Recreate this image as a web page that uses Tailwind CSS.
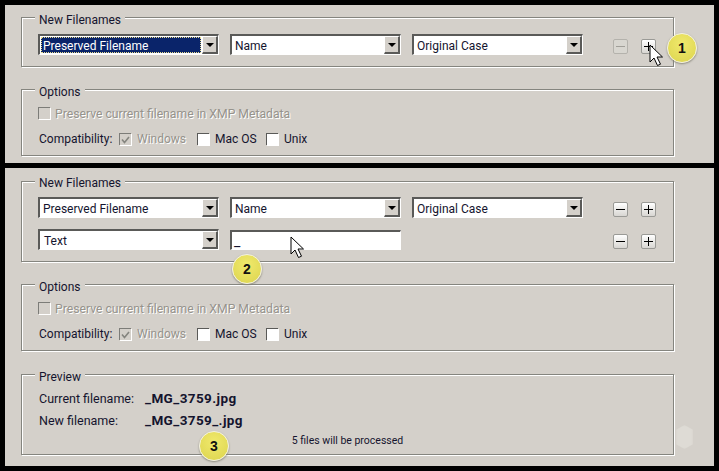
<!DOCTYPE html>
<html lang="en">
<head>
  <meta charset="UTF-8" />
  <title>Batch Rename</title>
  <script src="https://cdn.jsdelivr.net/npm/@tailwindcss/browser@4"></script>
</head>
<body class="bg-black w-[719px] h-[471px] overflow-hidden relative font-['Roboto',sans-serif] text-[12px] leading-[15px] text-[#14142e] px-[5px] pt-[5px]">

  <!-- Top panel: one row -->
  <section class="relative w-[709px] h-[158px] bg-[#d4d0ca] pt-[12px] pl-[16px]">
    <div class="relative w-[653px] h-[50px] border border-[#85857f] shadow-[1px_1px_0_#fff,inset_1px_1px_0_#fff] pt-[16px] pl-[16px]">
      <span class="absolute -top-[5px] left-[13px] px-[4px] bg-[#d4d0ca]">New Filenames</span>
      <div class="flex items-center">
        <div class="w-[181px] h-[21px] flex border-t-2 border-l-2 border-[#5a5a58] border-r border-b border-r-white border-b-white bg-white">
          <div class="flex-1 m-px bg-[#0a246a] text-white border border-dotted border-[#e8dc90] pl-px pt-[2px] flex items-center">Preserved Filename</div>
          <div class="w-[16px] flex items-center justify-center bg-[#d4d0ca] border-t border-l border-white border-r-2 border-b-2 border-r-[#5a5a58] border-b-[#5a5a58]">
            <svg width="8" height="4" viewBox="0 0 8 4"><path d="M0 0h8L4 4z" fill="#000"/></svg>
          </div>
        </div>
        <div class="ml-[11px] w-[171px] h-[21px] flex border-t-2 border-l-2 border-[#5a5a58] border-r border-b border-r-white border-b-white bg-white">
          <div class="flex-1 pl-[3px] pt-[2px] flex items-center">Name</div>
          <div class="w-[16px] flex items-center justify-center bg-[#d4d0ca] border-t border-l border-white border-r-2 border-b-2 border-r-[#5a5a58] border-b-[#5a5a58]">
            <svg width="8" height="4" viewBox="0 0 8 4"><path d="M0 0h8L4 4z" fill="#000"/></svg>
          </div>
        </div>
        <div class="ml-[11px] w-[171px] h-[21px] flex border-t-2 border-l-2 border-[#5a5a58] border-r border-b border-r-white border-b-white bg-white">
          <div class="flex-1 pl-[3px] pt-[2px] flex items-center">Original Case</div>
          <div class="w-[16px] flex items-center justify-center bg-[#d4d0ca] border-t border-l border-white border-r-2 border-b-2 border-r-[#5a5a58] border-b-[#5a5a58]">
            <svg width="8" height="4" viewBox="0 0 8 4"><path d="M0 0h8L4 4z" fill="#000"/></svg>
          </div>
        </div>
        <div class="ml-[30px] mt-[3px] w-[15px] h-[15px] flex items-center justify-center border border-[#b4b2ac] rounded-[2px] bg-[#d8d6d0]">
          <div class="w-[9px] h-px bg-[#a09e98]"></div>
        </div>
        <div class="ml-[13px] mt-[3px] w-[15px] h-[15px] relative border border-[#9a9a96] rounded-[2px] bg-gradient-to-b from-white to-[#d8d6d2]">
          <div class="absolute left-[2px] top-[6px] w-[9px] h-px bg-black"></div>
          <div class="absolute left-[6px] top-[2px] w-px h-[9px] bg-black"></div>
        </div>
      </div>
    </div>

    <div class="relative mt-[22px] w-[653px] h-[67px] border border-[#85857f] shadow-[1px_1px_0_#fff,inset_1px_1px_0_#fff] pt-[17px] pl-[16px]">
      <span class="absolute -top-[5px] left-[13px] px-[4px] bg-[#d4d0ca]">Options</span>
      <div class="flex items-center h-[12px]">
        <div class="w-[12px] h-[12px] border-t border-l border-[#7c7c78] shadow-[1px_1px_0_#fff]"></div>
        <span class="ml-[5px] mt-[2px] text-[12.2px] text-[#96938c] [text-shadow:1px_1px_0_#fff]">Preserve current filename in XMP Metadata</span>
      </div>
      <div class="flex items-center h-[12px] mt-[14px]">
        <span class="ml-px w-[80px]">Compatibility:</span>
        <div class="w-[12px] h-[12px] flex items-center justify-center border-t border-l border-[#7c7c78] shadow-[1px_1px_0_#fff] bg-[#d4d0ca]">
          <svg width="9" height="8" viewBox="0 0 9 8"><path d="M1 3.5l2.500 3L8 1" fill="none" stroke="#85857f" stroke-width="1.6"/></svg>
        </div>
        <span class="ml-[6px] w-[60px] text-[#96938c] [text-shadow:1px_1px_0_#fff]">Windows</span>
        <div class="w-[12px] h-[12px] bg-white border-t border-l border-[#5a5a58] shadow-[1px_1px_0_#fff]"></div>
        <span class="ml-[6px] w-[51px]">Mac OS</span>
        <div class="w-[12px] h-[12px] bg-white border-t border-l border-[#5a5a58] shadow-[1px_1px_0_#fff]"></div>
        <span class="ml-[6px]">Unix</span>
      </div>
    </div>

    <div class="absolute left-[662px] top-[28px] w-[30px] h-[30px] rounded-full border border-[#f4f2dc] bg-[radial-gradient(circle_at_50%_35%,#f0e96c,#dcd44e)] shadow-[0_1px_2px_#8a887a] flex items-center justify-center font-['Liberation_Sans',sans-serif] font-bold text-[14px] text-[#111]">1</div>
    <svg class="absolute left-[644px] top-[39px]" width="15" height="23" viewBox="0 0 15 23"><path d="M1 1v17l4-4 3.500 7.500 3-1.300L8 13h5.500z" fill="#fff" stroke="#000"/></svg>
  </section>

  <!-- Bottom panel: two rows and the preview -->
  <section class="relative w-[709px] h-[298px] mt-[5px] bg-[#d4d0ca] pt-[13px] pl-[16px]">
    <div class="relative w-[653px] h-[81px] border border-[#85857f] shadow-[1px_1px_0_#fff,inset_1px_1px_0_#fff] pt-[15px] pl-[16px]">
      <span class="absolute -top-[6px] left-[13px] px-[4px] bg-[#d4d0ca]">New Filenames</span>
      <div class="flex items-center">
        <div class="w-[181px] h-[21px] flex border-t-2 border-l-2 border-[#5a5a58] border-r border-b border-r-white border-b-white bg-white">
          <div class="flex-1 pl-[3px] pt-[2px] flex items-center">Preserved Filename</div>
          <div class="w-[16px] flex items-center justify-center bg-[#d4d0ca] border-t border-l border-white border-r-2 border-b-2 border-r-[#5a5a58] border-b-[#5a5a58]">
            <svg width="8" height="4" viewBox="0 0 8 4"><path d="M0 0h8L4 4z" fill="#000"/></svg>
          </div>
        </div>
        <div class="ml-[11px] w-[171px] h-[21px] flex border-t-2 border-l-2 border-[#5a5a58] border-r border-b border-r-white border-b-white bg-white">
          <div class="flex-1 pl-[3px] pt-[2px] flex items-center">Name</div>
          <div class="w-[16px] flex items-center justify-center bg-[#d4d0ca] border-t border-l border-white border-r-2 border-b-2 border-r-[#5a5a58] border-b-[#5a5a58]">
            <svg width="8" height="4" viewBox="0 0 8 4"><path d="M0 0h8L4 4z" fill="#000"/></svg>
          </div>
        </div>
        <div class="ml-[11px] w-[171px] h-[21px] flex border-t-2 border-l-2 border-[#5a5a58] border-r border-b border-r-white border-b-white bg-white">
          <div class="flex-1 pl-[3px] pt-[2px] flex items-center">Original Case</div>
          <div class="w-[16px] flex items-center justify-center bg-[#d4d0ca] border-t border-l border-white border-r-2 border-b-2 border-r-[#5a5a58] border-b-[#5a5a58]">
            <svg width="8" height="4" viewBox="0 0 8 4"><path d="M0 0h8L4 4z" fill="#000"/></svg>
          </div>
        </div>
        <div class="ml-[30px] mt-[3px] w-[15px] h-[15px] relative border border-[#9a9a96] rounded-[2px] bg-gradient-to-b from-white to-[#d8d6d2]">
          <div class="absolute left-[2px] top-[6px] w-[9px] h-px bg-black"></div>
        </div>
        <div class="ml-[13px] mt-[3px] w-[15px] h-[15px] relative border border-[#9a9a96] rounded-[2px] bg-gradient-to-b from-white to-[#d8d6d2]">
          <div class="absolute left-[2px] top-[6px] w-[9px] h-px bg-black"></div>
          <div class="absolute left-[6px] top-[2px] w-px h-[9px] bg-black"></div>
        </div>
      </div>
      <div class="flex items-center mt-[11px]">
        <div class="w-[181px] h-[21px] flex border-t-2 border-l-2 border-[#5a5a58] border-r border-b border-r-white border-b-white bg-white">
          <div class="flex-1 pl-[4px] pt-[2px] flex items-center">Text</div>
          <div class="w-[16px] flex items-center justify-center bg-[#d4d0ca] border-t border-l border-white border-r-2 border-b-2 border-r-[#5a5a58] border-b-[#5a5a58]">
            <svg width="8" height="4" viewBox="0 0 8 4"><path d="M0 0h8L4 4z" fill="#000"/></svg>
          </div>
        </div>
        <div class="ml-[11px] w-[171px] h-[20px] border-t-2 border-l-2 border-[#5a5a58] border-r border-b border-r-white border-b-white bg-white pl-[2px] text-[14px] leading-[19px]">_</div>
        <div class="ml-[212px] mt-[3px] w-[15px] h-[15px] relative border border-[#9a9a96] rounded-[2px] bg-gradient-to-b from-white to-[#d8d6d2]">
          <div class="absolute left-[2px] top-[6px] w-[9px] h-px bg-black"></div>
        </div>
        <div class="ml-[13px] mt-[3px] w-[15px] h-[15px] relative border border-[#9a9a96] rounded-[2px] bg-gradient-to-b from-white to-[#d8d6d2]">
          <div class="absolute left-[2px] top-[6px] w-[9px] h-px bg-black"></div>
          <div class="absolute left-[6px] top-[2px] w-px h-[9px] bg-black"></div>
        </div>
      </div>
    </div>

    <div class="relative mt-[22px] w-[653px] h-[67px] border border-[#85857f] shadow-[1px_1px_0_#fff,inset_1px_1px_0_#fff] pt-[17px] pl-[16px]">
      <span class="absolute -top-[5px] left-[13px] px-[4px] bg-[#d4d0ca]">Options</span>
      <div class="flex items-center h-[12px]">
        <div class="w-[12px] h-[12px] border-t border-l border-[#7c7c78] shadow-[1px_1px_0_#fff]"></div>
        <span class="ml-[5px] mt-[2px] text-[12.2px] text-[#96938c] [text-shadow:1px_1px_0_#fff]">Preserve current filename in XMP Metadata</span>
      </div>
      <div class="flex items-center h-[12px] mt-[14px]">
        <span class="ml-px w-[80px]">Compatibility:</span>
        <div class="w-[12px] h-[12px] flex items-center justify-center border-t border-l border-[#7c7c78] shadow-[1px_1px_0_#fff] bg-[#d4d0ca]">
          <svg width="9" height="8" viewBox="0 0 9 8"><path d="M1 3.5l2.500 3L8 1" fill="none" stroke="#85857f" stroke-width="1.6"/></svg>
        </div>
        <span class="ml-[6px] w-[60px] text-[#96938c] [text-shadow:1px_1px_0_#fff]">Windows</span>
        <div class="w-[12px] h-[12px] bg-white border-t border-l border-[#5a5a58] shadow-[1px_1px_0_#fff]"></div>
        <span class="ml-[6px] w-[51px]">Mac OS</span>
        <div class="w-[12px] h-[12px] bg-white border-t border-l border-[#5a5a58] shadow-[1px_1px_0_#fff]"></div>
        <span class="ml-[6px]">Unix</span>
      </div>
    </div>

    <div class="relative mt-[23px] w-[653px] h-[81px] border border-[#85857f] shadow-[1px_1px_0_#fff,inset_1px_1px_0_#fff] pt-[12px]">
      <span class="absolute -top-[5px] left-[13px] px-[4px] bg-[#d4d0ca]">Preview</span>
      <div class="flex items-center h-[22px] pl-[17px]">
        <span class="w-[106px] text-[12.5px]">Current filename:</span>
        <span class="font-bold text-[13.5px] tracking-[0.4px]">_MG_3759.jpg</span>
      </div>
      <div class="flex items-center h-[22px] pl-[17px]">
        <span class="w-[106px] text-[12.5px]">New filename:</span>
        <span class="font-bold text-[13.5px] tracking-[0.4px]">_MG_3759_.jpg</span>
      </div>
      <div class="text-center text-[10.5px] mt-[2px]">5 files will be processed</div>
    </div>

    <div class="absolute left-[671px] top-[257px] w-[17px] h-[24px] bg-[#dedbd5] blur-[1px] [clip-path:polygon(50%_0,100%_20%,100%_80%,50%_100%,0_80%,0_20%)]"></div>
    <div class="absolute left-[227px] top-[86px] w-[30px] h-[30px] rounded-full border border-[#f4f2dc] bg-[radial-gradient(circle_at_50%_35%,#f0e96c,#dcd44e)] shadow-[0_1px_2px_#8a887a] flex items-center justify-center font-['Liberation_Sans',sans-serif] font-bold text-[14px] text-[#111]">2</div>
    <div class="absolute left-[194px] top-[263px] w-[30px] h-[30px] rounded-full border border-[#f4f2dc] bg-[radial-gradient(circle_at_50%_35%,#f0e96c,#dcd44e)] shadow-[0_1px_2px_#8a887a] flex items-center justify-center font-['Liberation_Sans',sans-serif] font-bold text-[14px] text-[#111]">3</div>
    <svg class="absolute left-[285px] top-[68px]" width="15" height="23" viewBox="0 0 15 23"><path d="M1 1v17l4-4 3.500 7.500 3-1.300L8 13h5.500z" fill="#fff" stroke="#000"/></svg>
  </section>
</body>
</html>
